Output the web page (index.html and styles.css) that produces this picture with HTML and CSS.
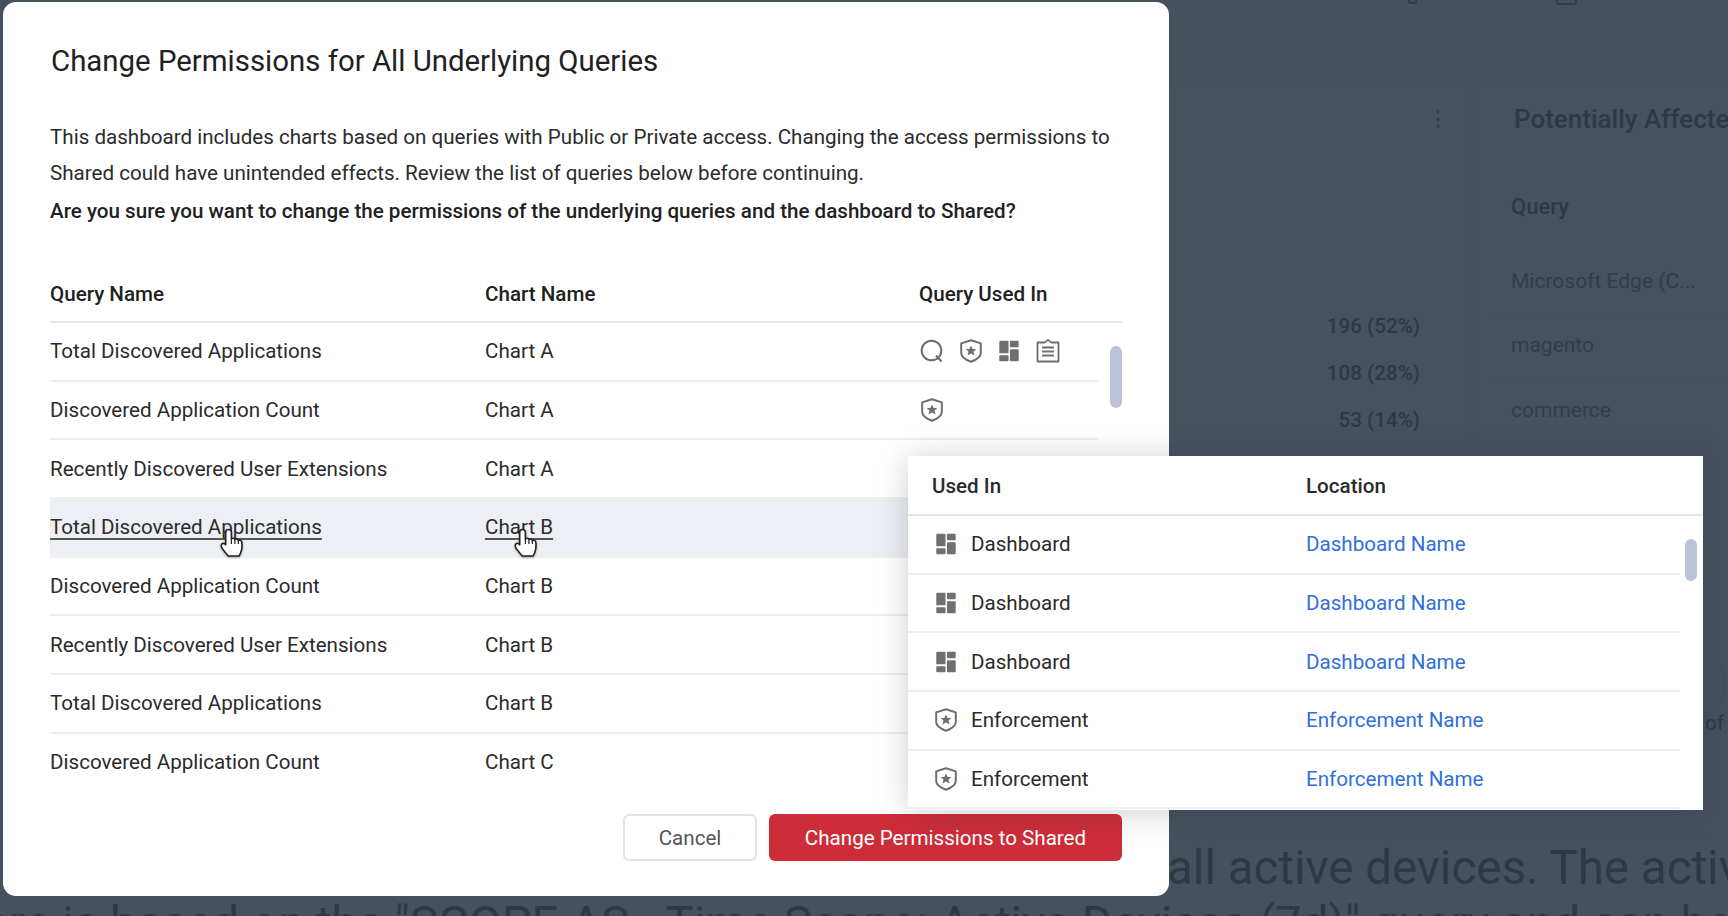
FILE: index.html
```html
<!DOCTYPE html>
<html lang="en">
<head>
<meta charset="utf-8">
<title>Change Permissions</title>
<link rel="stylesheet" href="styles.css">
</head>
<body>
<svg class="defs" aria-hidden="true">
  <symbol id="i-query" viewBox="0 0 24 24"><circle cx="11.5" cy="11.5" r="9.8" fill="none" stroke="currentColor" stroke-width="2"/><path d="M16 16.5l5.500 6" fill="none" stroke="currentColor" stroke-width="2"/></symbol>
  <symbol id="i-shield" viewBox="0 0 24 24"><path d="M12 1.200l9.800 3.200v9.500c0 3.700-4.700 6.900-9.800 8.900-5.100-2-9.800-5.200-9.800-8.900V4.400z" fill="none" stroke="currentColor" stroke-width="2" stroke-linejoin="round"/><path d="M12 6.600l1.650 3.500h3.750l-2.900 2.500 1 3.900L12 14.500l-3.500 2 1-3.900-2.900-2.500h3.750z" fill="currentColor"/></symbol>
  <symbol id="i-dash" viewBox="-1 -1 26 26"><path d="M2.500 1h8a1 1 0 0 1 1 1v11.500a1 1 0 0 1-1 1h-8a1 1 0 0 1-1-1V2a1 1 0 0 1 1-1zM14 1h7.500a1 1 0 0 1 1 1v5a1 1 0 0 1-1 1H14a1 1 0 0 1-1-1V2a1 1 0 0 1 1-1zM2.500 16.500h8a1 1 0 0 1 1 1V22a1 1 0 0 1-1 1h-8a1 1 0 0 1-1-1v-4.500a1 1 0 0 1 1-1zM14 10h7.500a1 1 0 0 1 1 1v11a1 1 0 0 1-1 1H14a1 1 0 0 1-1-1V11a1 1 0 0 1 1-1z" fill="currentColor"/></symbol>
  <symbol id="i-clip" viewBox="0 0 24 24"><path d="M8.500 3.500H1.500v19h21v-19h-7L12 .9z" fill="none" stroke="currentColor" stroke-width="1.800" stroke-linejoin="round"/><path d="M6 8.500h12M6 12.500h12M6 16.500h12" fill="none" stroke="currentColor" stroke-width="1.800"/></symbol>
  <symbol id="i-hand" viewBox="0 0 24 30"><path d="M8.500 1.500c1.700 0 2.900 1.200 2.900 2.800V11c1.100-1.100 2.900-.9 3.500.5 1.100-.9 2.900-.5 3.400.9 1.300-.7 3.300 0 3.500 1.800.4 3.300.2 6.600-.7 9.300-.6 1.900-1.300 3.300-2.100 4.500H8.300C6.300 25.600 3.400 22.300 1.700 19.300c-.8-1.500-.4-3.100.9-3.700 1.300-.5 2.500 0 3.100 1.200V4.300c0-1.600 1.100-2.800 2.800-2.800z" fill="#fff" stroke="#222" stroke-width="1.600" stroke-linejoin="round"/><path d="M11.400 11v5M14.900 11.500V16M18.300 12.400V16" stroke="#222" stroke-width="1.200" fill="none"/></symbol>
</svg>

<div class="page">
  <div class="page-top">
    <span class="stub stub-a"></span>
    <span class="stub stub-b"></span>
  </div>
  <div class="panels">
    <section class="panel panel-left">
      <div class="kebab">⋮</div>
      <div class="values">
        <div>196 (52%)</div>
        <div>108 (28%)</div>
        <div>53 (14%)</div>
      </div>
    </section>
    <section class="panel panel-right">
      <h2 class="panel-title">Potentially Affected Devices</h2>
      <div class="panel-head">Query</div>
      <div class="panel-row">Microsoft Edge (C...</div>
      <div class="panel-row">magento</div>
      <div class="panel-row">commerce</div>
      <div class="pager"><span class="pager-box"></span><span class="pager-of">of</span></div>
    </section>
  </div>
  <div class="caption">
    <p class="caption-one"><span class="caption-lead">s</span>all active devices. The active</p>
    <p class="caption-two">ore is based on the "SCOPE AS - Time Scope: Active Devices (7d)" query and can be</p>
  </div>
</div>

<div class="modal">
  <h1 class="modal-title">Change Permissions for All Underlying Queries</h1>
  <p class="modal-text">This dashboard includes charts based on queries with Public or Private access. Changing the access permissions to<br>Shared could have unintended effects. Review the list of queries below before continuing.</p>
  <p class="modal-ask">Are you sure you want to change the permissions of the underlying queries and the dashboard to Shared?</p>
  <div class="table-head">
    <span>Query Name</span><span>Chart Name</span><span>Query Used In</span>
  </div>
  <div class="table-body">
    <div class="row"><span>Total Discovered Applications</span><span>Chart A</span>
      <span class="icons">
        <svg class="icon"><use href="#i-query"/></svg>
        <svg class="icon"><use href="#i-shield"/></svg>
        <svg class="icon"><use href="#i-dash"/></svg>
        <svg class="icon"><use href="#i-clip"/></svg>
      </span></div>
    <div class="row"><span>Discovered Application Count</span><span>Chart A</span>
      <span class="icons"><svg class="icon"><use href="#i-shield"/></svg></span></div>
    <div class="row"><span>Recently Discovered User Extensions</span><span>Chart A</span><span></span></div>
    <div class="row row-hover"><span class="link-under">Total Discovered Applications</span><span class="link-under">Chart B</span><span></span></div>
    <div class="row"><span>Discovered Application Count</span><span>Chart B</span><span></span></div>
    <div class="row"><span>Recently Discovered User Extensions</span><span>Chart B</span><span></span></div>
    <div class="row"><span>Total Discovered Applications</span><span>Chart B</span><span></span></div>
    <div class="row"><span>Discovered Application Count</span><span>Chart C</span><span></span></div>
    <span class="thumb thumb-table"></span>
    <svg class="hand hand-a"><use href="#i-hand"/></svg>
    <svg class="hand hand-b"><use href="#i-hand"/></svg>
  </div>
  <div class="modal-foot">
    <button class="btn btn-cancel">Cancel</button>
    <button class="btn btn-danger">Change Permissions to Shared</button>
  </div>
</div>

<div class="popover">
  <div class="pop-head"><span>Used In</span><span>Location</span></div>
  <div class="pop-row"><span class="pop-type"><svg class="icon"><use href="#i-dash"/></svg>Dashboard</span><a class="pop-link">Dashboard Name</a></div>
  <div class="pop-row"><span class="pop-type"><svg class="icon"><use href="#i-dash"/></svg>Dashboard</span><a class="pop-link">Dashboard Name</a></div>
  <div class="pop-row"><span class="pop-type"><svg class="icon"><use href="#i-dash"/></svg>Dashboard</span><a class="pop-link">Dashboard Name</a></div>
  <div class="pop-row"><span class="pop-type"><svg class="icon"><use href="#i-shield"/></svg>Enforcement</span><a class="pop-link">Enforcement Name</a></div>
  <div class="pop-row"><span class="pop-type"><svg class="icon"><use href="#i-shield"/></svg>Enforcement</span><a class="pop-link">Enforcement Name</a></div>
  <span class="thumb thumb-pop"></span>
</div>
</body>
</html>
```

FILE: styles.css
```css
* { box-sizing: border-box; }
html, body { margin: 0; height: 100%; overflow: hidden; }
body {
  position: relative;
  width: 1728px;
  height: 916px;
  background: #47505f;
  font-family: Roboto, "Liberation Sans", sans-serif;
  color: #2f3847;
}
.defs { position: absolute; width: 0; height: 0; }

/* dimmed page behind the dialog */
.page { display: flex; flex-direction: column; height: 916px; overflow: hidden; }
.page-top { flex: none; height: 87px; display: flex; align-items: flex-start; padding-left: 1408px; gap: 139px; }
.stub { display: block; border: 2px solid #333c4b; border-top: 0; border-radius: 0 0 3px 3px; }
.stub-a { width: 9px; height: 4px; }
.stub-b { width: 21px; height: 5px; }
.panels { flex: none; display: flex; height: 743px; gap: 10px; padding-left: 1170px; }
.panel { background: #485160; }
.panel-left { width: 298px; padding-top: 18px; display: flex; flex-direction: column; align-items: flex-end; padding-right: 48px; }
.kebab { width: 12px; margin-right: -19px; text-align: center; font-size: 22px; line-height: 28px; color: #333c4b; }
.values { margin-top: 170px; text-align: right; font-size: 20.600px; font-weight: 500; line-height: 47px; }
.panel-right { width: 250px; padding: 0 4px 0 33px; white-space: nowrap; display: flex; flex-direction: column; }
.panel-title { margin: 14px 0 0 3px; font-size: 26px; line-height: 36px; font-weight: 500; }
.panel-head { margin: 55px 0 27px; font-size: 22px; font-weight: 500; line-height: 30px; }
.panel-row { display: flex; align-items: center; flex: none; height: 64.500px; margin-left: -21px; padding-left: 21px; border-bottom: 1px solid #444d5b; font-size: 21px; color: #333c4b; }
.pager { display: flex; flex-direction: column; align-items: flex-end; margin-top: 225px; }
.pager-box { width: 22px; height: 34px; border: 1px solid #434d5c; border-radius: 0 5px 5px 0; }
.pager-of { font-size: 20.600px; line-height: 30px; margin-top: 6px; }
.caption { flex: none; white-space: nowrap; font-size: 47.500px; line-height: 56px; color: #2f3847; margin-top: 10px; }
.caption p { margin: 0; }
.caption-lead { display: inline-block; width: 1189px; margin-left: -22px; }
.caption-two { margin-left: -17.500px !important; }

/* dialog */
.modal {
  position: absolute;
  left: 3px;
  top: 2px;
  width: 1166px;
  height: 894px;
  padding: 41px 47px 0;
  background: #fff;
  border-radius: 13px;
  color: #212121;
}
.modal-title { margin: 0 0 0 1px; font-size: 29.400px; line-height: 36px; font-weight: 400; }
.modal-text { margin: 40px 0 0; font-size: 20.600px; line-height: 36px; color: #2b2b2b; }
.modal-ask { margin: 2px 0 0; font-size: 20.600px; line-height: 36px; font-weight: 500; }
.table-head, .row { display: grid; grid-template-columns: 435px 434px 1fr; align-items: center; font-size: 20.600px; }
.table-head { margin-top: 36px; height: 58px; padding-top: 1px; font-weight: 500; border-bottom: 2px solid #e6e6e6; }
.table-body { position: relative; height: 467px; overflow: hidden; padding-right: 24px; }
.row { height: 58.700px; border-bottom: 2px solid #efefef; color: #2b2b2b; }
.row-hover { background: #eceff4; }
.link-under { justify-self: start; text-decoration: underline; text-underline-offset: 4px; text-decoration-color: #555; }
.icons { display: flex; align-items: center; gap: 14.600px; margin-left: 1px; color: #6f6f6f; }
.icon { display: block; width: 24px; height: 24px; flex: none; color: #6f6f6f; }
.thumb { position: absolute; display: block; width: 12px; border-radius: 6px; background: #bcc3d8; }
.thumb-table { right: 0; top: 23px; height: 62px; }
.hand { position: absolute; width: 24px; height: 30px; filter: drop-shadow(0 1px 1px rgba(0,0,0,.35)); }
.hand-a { left: 170px; top: 205px; }
.hand-b { left: 464px; top: 205px; }
.modal-foot { display: flex; justify-content: flex-end; gap: 12px; margin-top: 24px; }
.btn { height: 47px; border-radius: 6px; font: 400 20.600px Roboto, "Liberation Sans", sans-serif; }
.btn-cancel { width: 134px; background: #fff; border: 2px solid #e2e2e2; color: #555; }
.btn-danger { width: 353px; background: #cd2d39; border: 0; color: #fff; }

/* popover */
.popover {
  position: absolute;
  left: 908px;
  top: 456px;
  width: 795px;
  height: 354px;
  padding-right: 23px;
  background: #fff;
  box-shadow: 0 2px 30px rgba(30, 35, 50, .22);
  color: #2b2b2b;
  font-size: 20.600px;
}
.pop-head, .pop-row { display: grid; grid-template-columns: 375px 1fr; align-items: center; padding-left: 23px; }
.pop-head { height: 60px; padding-top: 1px; font-weight: 500; border-bottom: 2px solid #e6e6e6; margin-right: -23px; }
.pop-head span:first-child { margin-left: 1px; }
.pop-row { height: 58.700px; border-bottom: 2px solid #efefef; }
.pop-type { display: flex; align-items: center; gap: 13px; padding-left: 3px; }
.pop-link { color: #2f6fdb; }
.thumb-pop { right: 6px; top: 83px; height: 42px; }
```
